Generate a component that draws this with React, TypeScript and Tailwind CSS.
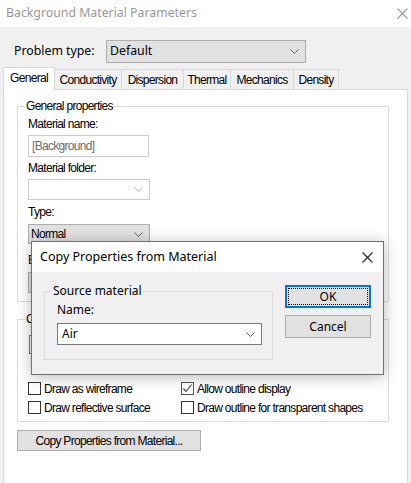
import type { ReactNode } from "react";

// Windows dialog fonts: narrow sans for the property page, YaHei-like for the rest
const narrow = "font-[family-name:'Liberation_Sans',Arial,sans-serif] text-[12px] tracking-[-0.7px]";
const ui = "font-[family-name:'Noto_Sans','Open_Sans',sans-serif]";

function Chevron({ color = "#606060" }: { color?: string }) {
  return (
    <svg width="9" height="5" viewBox="0 0 9 5" className="shrink-0">
      <polyline points="0.5,0.5 4.5,4.5 8.5,0.5" fill="none" stroke={color} strokeWidth="1" />
    </svg>
  );
}

function Close({ color }: { color: string }) {
  return (
    <svg width="11" height="11" viewBox="0 0 11 11">
      <path d="M0.5 0.5 L10.5 10.5 M10.5 0.5 L0.5 10.5" stroke={color} strokeWidth="1.1" fill="none" />
    </svg>
  );
}

function Group({ label, className, labelClass, children }: { label: string; className?: string; labelClass?: string; children: ReactNode }) {
  return (
    <div className={`relative border border-[#dcdcdc] ${className ?? ""}`}>
      <span className={`absolute -top-[8px] left-[7px] px-[1px] leading-[14px] ${labelClass ?? ""}`}>{label}</span>
      {children}
    </div>
  );
}

function Check({ label, checked }: { label: string; checked?: boolean }) {
  return (
    <div className="flex h-[19px] items-center gap-[3px]">
      <div className={`flex h-[13px] w-[13px] shrink-0 items-center justify-center border bg-white ${checked ? "border-[#555]" : "border-[#333]"}`}>
        {checked && (
          <svg width="11" height="11" viewBox="0 0 11 11">
            <polyline points="1.5,5.5 4,8.5 9.5,1.5" fill="none" stroke="#555" strokeWidth="1.2" />
          </svg>
        )}
      </div>
      <span className={`${narrow} whitespace-nowrap text-black`}>{label}</span>
    </div>
  );
}

const tabs = ["Conductivity", "Dispersion", "Thermal", "Mechanics", "Density"];
const tabW = [68, 63, 48, 64, 46];

export default function App() {
  return (
    <div className="relative flex h-[483px] w-[411px] flex-col overflow-hidden bg-[#f0f0f0]">
      <div className="flex h-[27px] shrink-0 items-center justify-between bg-white pl-[6px] pr-[3px]">
        <span className={`${ui} text-[12.3px] text-[#999]`}>Background Material Parameters</span>
        <Close color="#9a9a9a" />
      </div>

      <div className="flex items-center pl-[14px] pt-[13px]">
        <span className={`${ui} w-[92px] text-[12.3px] text-black`}>Problem type:</span>
        <div className="flex h-[23px] w-[200px] items-center justify-between border border-[#adadad] bg-[#e1e1e1] pl-[3px] pr-[6px]">
          <span className={`${ui} text-[12.3px] text-black`}>Default</span>
          <Chevron />
        </div>
      </div>

      <div className={`${narrow} mt-[4px] flex h-[22px] items-end pl-[3px] text-black`}>
        <div className="relative z-10 -mb-px flex h-[23px] w-[52px] items-center justify-center border-x border-t border-[#d9d9d9] bg-white pb-[2px]">
          General
        </div>
        {tabs.map((t, i) => (
          <div
            key={t}
            style={{ width: tabW[i] }}
            className="-ml-px flex h-[20px] items-center justify-center border-x border-t border-[#d9d9d9] bg-[#f0f0f0] first:ml-0"
          >
            {t}
          </div>
        ))}
      </div>

      <div className="ml-[3px] h-[420px] w-[405px] shrink-0 border border-[#d9d9d9] bg-white pt-[16px]">
        <Group label="General properties" className="ml-[13px] w-[372px] pl-[10px] pt-[10px] pb-[8px]" labelClass={`${narrow} bg-white text-black`}>
          <div className={`${narrow} leading-[14px] text-black`}>Material name:</div>
          <div className="mt-[4px] flex h-[22px] w-[121px] items-center border border-[#cccccc] bg-white pl-[3px]">
            <span className={`${narrow} text-[#6d6d6d]`}>[Background]</span>
          </div>
          <div className={`${narrow} mt-[4px] leading-[14px] text-black`}>Material folder:</div>
          <div className="mt-[4px] flex h-[21px] w-[122px] items-center justify-end border border-[#cccccc] bg-white pr-[6px]">
            <Chevron color="#bfbfbf" />
          </div>
          <div className={`${narrow} mt-[5px] leading-[14px] text-black`}>Type:</div>
          <div className="mt-[5px] flex h-[20px] w-[122px] items-center justify-between border border-[#adadad] bg-[#e1e1e1] pl-[2px] pr-[6px]">
            <span className={`${narrow} text-black`}>Normal</span>
            <Chevron />
          </div>
          {/* label hidden under the dialog, only its first letter shows */}
          <div className={`${narrow} mt-[9px] leading-[14px] text-black`}>E</div>
          <div className="mt-[5px] h-[21px] w-[122px] border border-[#adadad] bg-[#e1e1e1]" />
        </Group>

        <Group label="C" className="ml-[13px] mt-[17px] w-[372px] pl-[10px] pt-[15px] pb-[4px]" labelClass={`${narrow} bg-white text-black`}>
          <div className="ml-[1px] h-[19px] w-[60px] border border-[#7a7a7a]" />
          <div className="mt-[25px] grid grid-cols-[153px_1fr]">
            <Check label="Draw as wireframe" />
            <Check label="Allow outline display" checked />
            <Check label="Draw reflective surface" />
            <Check label="Draw outline for transparent shapes" />
          </div>
        </Group>

        <div className={`${narrow} ml-[13px] mt-[8px] flex h-[21px] w-[184px] items-center justify-center whitespace-nowrap border border-[#adadad] bg-[#e1e1e1] text-black`}>
          Copy Properties from Material...
        </div>
      </div>

      <div className="absolute left-[31px] top-[241px] flex h-[134px] w-[353px] flex-col border border-[#707070] bg-[#f0f0f0] shadow-[0_2px_14px_rgba(0,0,0,0.28)]">
        <div className="flex h-[30px] shrink-0 items-center justify-between bg-white pl-[8px] pr-[10px]">
          <span className={`${ui} text-[12.5px] text-black`}>Copy Properties from Material</span>
          <Close color="#222" />
        </div>
        <div className="flex">
          <Group label="Source material" className="ml-[12px] mt-[19px] h-[69px] w-[229px] pl-[12px] pt-[10px]" labelClass={`${ui} bg-[#f0f0f0] text-[12px] text-black`}>
            <div className={`${ui} text-[12px] leading-[16px] text-black`}>Name:</div>
            <div className="mt-[5px] flex h-[22px] w-[205px] items-center justify-between border border-[#7a7a7a] bg-white pl-[4px] pr-[6px]">
              <span className={`${ui} text-[12px] text-black`}>Air</span>
              <Chevron />
            </div>
          </Group>
          <div className="ml-[12px] mt-[13px] flex flex-col gap-[7px]">
            <div className="h-[23px] w-[86px] border-2 border-[#0078d7] bg-[#e1e1e1] p-px">
              <div className={`${ui} flex h-full items-center justify-center border border-dotted border-black text-[12px] text-black`}>OK</div>
            </div>
            <div className={`${ui} flex h-[23px] w-[86px] items-center justify-center border border-[#adadad] bg-[#e1e1e1] text-[12px] text-black`}>
              Cancel
            </div>
          </div>
        </div>
      </div>
    </div>
  );
}
